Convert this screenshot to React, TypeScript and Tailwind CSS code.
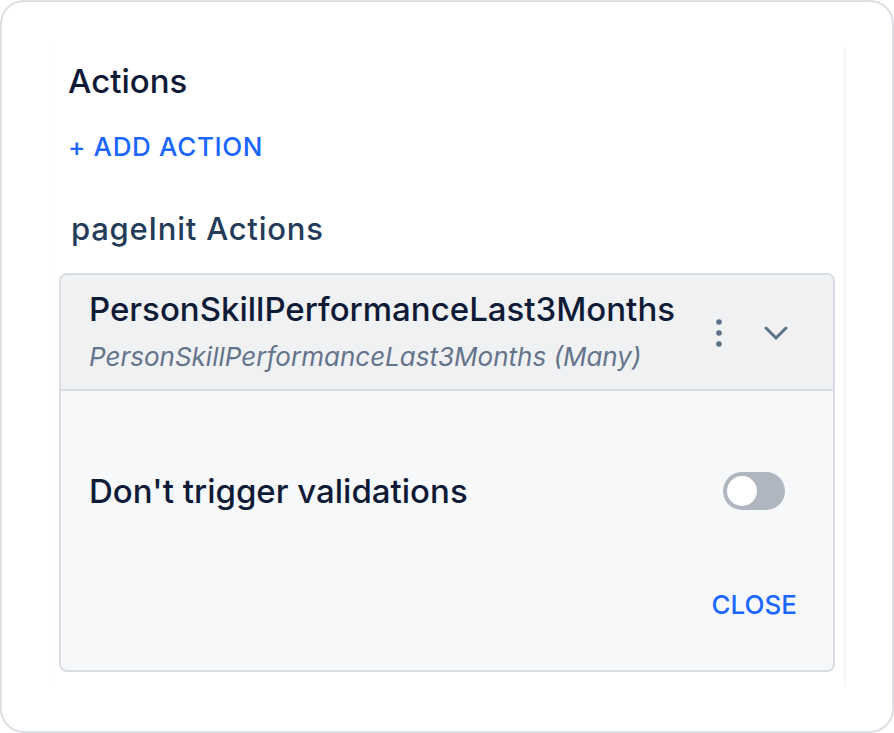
import { useState } from "react";

type Action = {
  name: string;
  source: string;
};

const actions: Action[] = [
  {
    name: "PersonSkillPerformanceLast3Months",
    source: "PersonSkillPerformanceLast3Months (Many)",
  },
];

function ActionCard({ action }: { action: Action }) {
  const [open, setOpen] = useState(true);
  const [skipValidation, setSkipValidation] = useState(false);

  return (
    <article className="overflow-hidden rounded-lg border-2 border-[#d9dce3] bg-[#f7f8fa]">
      {/* header */}
      <div className="flex items-center justify-between border-b-2 border-[#d9dce3] bg-[#f0f1f3] pt-2.5 pr-[41px] pb-2 pl-7">
        <div className="min-w-0">
          <h3 className="text-[33px] leading-12 font-medium">{action.name}</h3>
          <p className="text-[26px] leading-12 text-[#64748b] italic">
            {action.source}
          </p>
        </div>
        <div className="flex shrink-0 items-center gap-[25px] text-[#5f6f87]">
          <button type="button" aria-label="More options">
            <svg width="32" height="32" viewBox="0 0 32 32" fill="currentColor">
              <circle cx="16" cy="5" r="2.8" />
              <circle cx="16" cy="16" r="2.8" />
              <circle cx="16" cy="27" r="2.8" />
            </svg>
          </button>
          <button
            type="button"
            aria-label="Toggle details"
            aria-expanded={open}
            onClick={() => setOpen(!open)}
          >
            <svg
              width="32"
              height="32"
              viewBox="0 0 32 32"
              fill="none"
              stroke="currentColor"
              strokeWidth="3"
              strokeLinecap="round"
              strokeLinejoin="miter"
            >
              <path d="M6 11L16 21L26 11" />
            </svg>
          </button>
        </div>
      </div>

      {/* body */}
      {open && (
        <div className="pt-20 pr-9 pb-[43px] pl-7">
          <label className="flex items-center justify-between pr-3">
            <span className="text-[33px] leading-10 font-medium">
              Don't trigger validations
            </span>
            <input
              type="checkbox"
              role="switch"
              checked={skipValidation}
              onChange={(e) => setSkipValidation(e.target.checked)}
              className="flex h-[38px] w-[62px] shrink-0 appearance-none items-center rounded-full bg-[#b0b6c0] px-1 before:size-[30px] before:rounded-full before:bg-white checked:justify-end checked:bg-[#1f66f5]"
            />
          </label>
          <div className="mt-18 flex justify-end">
            <button
              type="button"
              className="text-[26px] leading-11 font-medium text-[#1a66ff]"
              onClick={() => setOpen(false)}
            >
              CLOSE
            </button>
          </div>
        </div>
      )}
    </article>
  );
}

export default function App() {
  return (
    <main className="bg-white font-['Inter',sans-serif] text-[#0f1b36]">
      <div className="rounded-3xl border-2 border-[#dcdfe4] px-[46px] py-[45px]">
        <section className="border-x-2 border-l-[#fdfdfd] border-r-[#f5f6f7] px-[9px] pt-3 pb-3.5">
          <div className="px-[9px]">
            <h1 className="text-[33px] leading-11 font-medium">Actions</h1>
            <button
              type="button"
              className="mt-6 text-[26px] leading-10 font-medium tracking-wide text-[#1a66ff]"
            >
              + ADD ACTION
            </button>
          </div>
          <h2 className="mt-10 px-3 text-[31px] leading-11 font-medium tracking-wide text-[#243b5a]">
            pageInit Actions
          </h2>
          <div className="mt-[22px] flex flex-col gap-4">
            {actions.map((action) => (
              <ActionCard key={action.name} action={action} />
            ))}
          </div>
        </section>
      </div>
    </main>
  );
}
